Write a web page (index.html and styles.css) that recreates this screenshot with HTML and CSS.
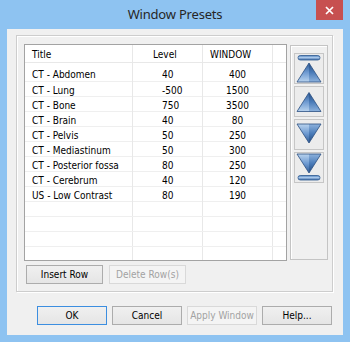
FILE: index.html
```html
<!DOCTYPE html>
<html lang="en">
<head>
  <meta charset="UTF-8" />
  <title>Window Presets</title>
  <link rel="stylesheet" href="styles.css">
</head>
<body>
  <div class="window">
    <div class="titlebar">
      <span class="title">Window Presets</span>
      <button class="close" aria-label="Close">
        <svg width="9" height="9" viewBox="0 0 9 9"><path d="M1 1 L8 8 M8 1 L1 8" stroke="#fff" stroke-width="1.7"/></svg>
      </button>
    </div>

    <div class="client">
      <div class="group">
        <div class="group-top">
          <div class="grid">
            <div class="grid-row head"><span class="c-title">Title</span><span class="c-level">Level</span><span class="c-window">WINDOW</span><span></span></div>
            <div class="grid-row first"><span class="c-title">CT - Abdomen</span><span class="c-level">40</span><span class="c-window">400</span><span></span></div>
            <div class="grid-row"><span class="c-title">CT - Lung</span><span class="c-level">-500</span><span class="c-window">1500</span><span></span></div>
            <div class="grid-row"><span class="c-title">CT - Bone</span><span class="c-level">750</span><span class="c-window">3500</span><span></span></div>
            <div class="grid-row"><span class="c-title">CT - Brain</span><span class="c-level">40</span><span class="c-window">80</span><span></span></div>
            <div class="grid-row"><span class="c-title">CT - Pelvis</span><span class="c-level">50</span><span class="c-window">250</span><span></span></div>
            <div class="grid-row"><span class="c-title">CT - Mediastinum</span><span class="c-level">50</span><span class="c-window">300</span><span></span></div>
            <div class="grid-row"><span class="c-title">CT - Posterior fossa</span><span class="c-level">80</span><span class="c-window">250</span><span></span></div>
            <div class="grid-row"><span class="c-title">CT - Cerebrum</span><span class="c-level">40</span><span class="c-window">120</span><span></span></div>
            <div class="grid-row"><span class="c-title">US - Low Contrast</span><span class="c-level">80</span><span class="c-window">190</span><span></span></div>
            <div class="grid-row"><span></span><span></span><span></span><span></span></div>
            <div class="grid-row"><span></span><span></span><span></span><span></span></div>
            <div class="grid-row"><span></span><span></span><span></span><span></span></div>
            <div class="grid-row"><span></span><span></span><span></span><span></span></div>
            <div class="grid-row"><span></span><span></span><span></span><span></span></div>
          </div>

          <div class="mover">
            <button class="mv" aria-label="Move to top">
              <svg width="28" height="29" viewBox="0 0 28 29">
                <defs>
                  <linearGradient id="upL" x1="0" y1="0" x2="0" y2="1">
                    <stop offset="0" stop-color="#2d5a96"/>
                    <stop offset="0.5" stop-color="#6f9bd2"/>
                    <stop offset="1" stop-color="#b9d3ee"/>
                  </linearGradient>
                  <linearGradient id="upR" x1="0" y1="0" x2="0" y2="1">
                    <stop offset="0" stop-color="#244c82"/>
                    <stop offset="0.5" stop-color="#4b7cb9"/>
                    <stop offset="1" stop-color="#8db2dd"/>
                  </linearGradient>
                  <linearGradient id="dnL" x1="0" y1="0" x2="0" y2="1">
                    <stop offset="0" stop-color="#b9d3ee"/>
                    <stop offset="0.5" stop-color="#6f9bd2"/>
                    <stop offset="1" stop-color="#2d5a96"/>
                  </linearGradient>
                  <linearGradient id="dnR" x1="0" y1="0" x2="0" y2="1">
                    <stop offset="0" stop-color="#8db2dd"/>
                    <stop offset="0.5" stop-color="#4b7cb9"/>
                    <stop offset="1" stop-color="#244c82"/>
                  </linearGradient>
                  <linearGradient id="bar" x1="0" y1="0" x2="0" y2="1">
                    <stop offset="0" stop-color="#4d7fbd"/>
                    <stop offset="0.45" stop-color="#a9c8ea"/>
                    <stop offset="1" stop-color="#3d6aa6"/>
                  </linearGradient>
                </defs>
                <rect x="3" y="1.5" width="22" height="4.5" rx="2.25" fill="url(#bar)" stroke="#2f5a90" stroke-width="0.8"/>
                <polygon points="14,9 2,28 14,28" fill="url(#upL)"/>
                <polygon points="14,9 14,28 26,28" fill="url(#upR)"/>
                <polygon points="14,9 2,28 26,28" fill="none" stroke="#2b4f82" stroke-width="0.8"/>
              </svg>
            </button>
            <button class="mv" aria-label="Move up">
              <svg width="28" height="29" viewBox="0 0 28 29">
                <polygon points="14,5.5 2,24.5 14,24.5" fill="url(#upL)"/>
                <polygon points="14,5.5 14,24.5 26,24.5" fill="url(#upR)"/>
                <polygon points="14,5.5 2,24.5 26,24.5" fill="none" stroke="#2b4f82" stroke-width="0.8"/>
              </svg>
            </button>
            <button class="mv" aria-label="Move down">
              <svg width="28" height="29" viewBox="0 0 28 29">
                <polygon points="2,4 14,4 14,23" fill="url(#dnL)"/>
                <polygon points="14,4 26,4 14,23" fill="url(#dnR)"/>
                <polygon points="2,4 26,4 14,23" fill="none" stroke="#2b4f82" stroke-width="0.8"/>
              </svg>
            </button>
            <button class="mv" aria-label="Move to bottom">
              <svg width="28" height="29" viewBox="0 0 28 29">
                <polygon points="2,1 14,1 14,20" fill="url(#dnL)"/>
                <polygon points="14,1 26,1 14,20" fill="url(#dnR)"/>
                <polygon points="2,1 26,1 14,20" fill="none" stroke="#2b4f82" stroke-width="0.8"/>
                <rect x="3" y="22.5" width="22" height="4.5" rx="2.25" fill="url(#bar)" stroke="#2f5a90" stroke-width="0.8"/>
              </svg>
            </button>
          </div>
        </div>

        <div class="row-actions">
          <button class="btn wide">Insert Row</button>
          <button class="btn wide" disabled>Delete Row(s)</button>
        </div>
      </div>

      <div class="dialog-actions">
        <button class="btn default">OK</button>
        <button class="btn">Cancel</button>
        <button class="btn" disabled>Apply Window</button>
        <button class="btn">Help...</button>
      </div>
    </div>
  </div>
</body>
</html>
```

FILE: styles.css
```css
* {
  box-sizing: border-box;
}

html, body {
  margin: 0;
  padding: 0;
}

body {
  width: 350px;
  height: 342px;
  overflow: hidden;
  font-family: "DejaVu Sans Condensed", "DejaVu Sans", sans-serif;
  font-size: 10px;
  color: #000;
}

.window {
  width: 350px;
  height: 342px;
  background: #8ec3f1;
  padding: 0 7px 7px;
  display: flex;
  flex-direction: column;
}

.titlebar {
  height: 29px;
  display: grid;
  grid-template-columns: 1fr auto 1fr;
}

.title {
  grid-column: 2;
  font-family: "Noto Sans", sans-serif;
  font-size: 13px;
  letter-spacing: -0.2px;
  line-height: 29px;
  color: #262626;
}

.close {
  grid-column: 3;
  justify-self: end;
  width: 27px;
  height: 20px;
  padding: 0;
  border: 0;
  background: #c75050;
  display: flex;
  align-items: center;
  justify-content: center;
}

.client {
  flex: 1;
  background: #f0f0f0;
  padding: 6px 10px 0 9px;
  display: flex;
  flex-direction: column;
}

.group {
  height: 257px;
  border: 1px solid #cdcdcd;
  box-shadow: inset 1px 1px 0 #fff, 1px 1px 0 #fff;
  padding: 8px 0 0 7px;
}

.group-top {
  display: flex;
  gap: 3px;
  height: 217px;
}

/* preset grid */
.grid {
  width: 263px;
  height: 217px;
  border: 1px solid #a3a3a3;
  background: #fff;
  overflow: hidden;
}

.grid-row {
  display: grid;
  grid-template-columns: 108px 70px 70px 14px;
  height: 15px;
  border-bottom: 1px solid #efefef;
}

.grid-row span {
  border-right: 1px solid #e8e8e8;
  padding-top: 2px;
  line-height: 14px;
  white-space: nowrap;
}

.grid-row.head {
  height: 18px;
  border-bottom-color: #e8e8e8;
}

.grid-row.head span {
  padding-top: 3px;
}

.grid-row.first {
  height: 19px;
}

.grid-row.first span {
  padding-top: 5px;
}

.c-title {
  padding-left: 7px;
}

.c-level {
  padding-left: 29px;
}

.head .c-level {
  padding-left: 20px;
}

.c-window {
  text-align: center;
}

.head .c-window {
  text-align: left;
  padding-left: 7px;
}

/* move buttons */
.mover {
  width: 38px;
  height: 215px;
  margin-top: 1px;
  border: 1px solid #c4c4c4;
  box-shadow: inset 1px 1px 0 #fff;
  padding: 7px 0 0 3px;
  display: flex;
  flex-direction: column;
  gap: 2px;
}

.mv {
  width: 30px;
  height: 31px;
  padding: 0;
  border: 1px solid #c6c6c6;
  background: #ececec;
  display: block;
}

.mv svg {
  display: block;
}

/* push buttons */
.btn {
  height: 19px;
  width: 70px;
  padding: 0;
  border: 1px solid #acacac;
  background: linear-gradient(#f0f0f0, #e5e5e5);
  font-family: inherit;
  font-size: 10px;
  color: #000;
}

.btn.wide {
  width: 77px;
}

.btn.default {
  border-color: #3c8ee0;
}

.btn:disabled {
  color: #a2a2a2;
  border-color: #d9d9d9;
  background: #f4f4f4;
}

.row-actions {
  display: flex;
  gap: 6px;
  margin-top: 4px;
  padding-left: 2px;
}

.dialog-actions {
  display: flex;
  gap: 5px;
  margin-top: 14px;
  padding-left: 21px;
}
```
